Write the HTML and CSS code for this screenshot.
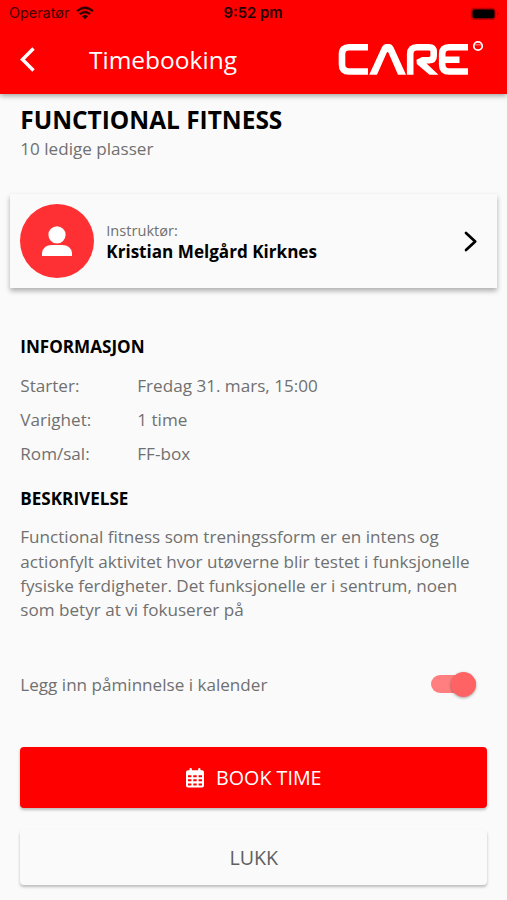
FILE: index.html
```html
<!DOCTYPE html>
<html lang="no">
<head>
<meta charset="utf-8">
<title>Timebooking</title>
<link rel="stylesheet" href="styles.css">
</head>
<body>
<header class="header">
  <div class="status">
    <div class="carrier"><span>Operatør</span>
      <svg class="wifi" width="18" height="14" viewBox="0 0 18 14" fill="none" stroke="#300" stroke-width="2.3"><path d="M1 5.2Q9-1.8 17 5.2M3.9 8.2Q9 3.8 14.1 8.2"/><path d="M9 13.3L5.9 10.2Q9 7.8 12.1 10.2Z" fill="#300" stroke="none"/></svg>
    </div>
    <span class="clock">9:52 pm</span>
    <svg class="battery" width="29" height="14" viewBox="0 0 29 14"><rect x=".7" y=".7" width="25" height="12.2" rx="3.5" fill="#c00000"/><rect x="2.5" y="2.5" width="22" height="8.8" rx="2" fill="#000"/><path d="M27 4.5Q30 6.8 27 9Z" fill="#a00000"/></svg>
  </div>
  <div class="navbar">
    <svg class="back" width="16" height="26" viewBox="0 0 16 26" fill="none" stroke="#fff" stroke-width="3.4"><path d="M14.5 1.5L3.5 12.5L14.5 23.5"/></svg>
    <h1 class="title">Timebooking</h1>
    <svg class="logo" width="146" height="35" viewBox="0 0 146 35" fill="none" stroke="#fff" stroke-width="6.6">
      <path d="M30 7.3H11Q4 7.3 4 14V24.8Q4 31.5 11 31.5H30"/>
      <path d="M31.2 34.8L44 7Q45.6 4 48 4H51.5Q53.8 4 55.4 7L68 34.8H60L50.6 13Q49.6 11 48.6 13L39 34.8Z" fill="#fff" stroke="none"/>
      <path d="M72.2 34.8V14Q72.2 7.3 79 7.3H91Q95.7 7.3 95.7 12V15.5Q95.7 20.2 91 20.2H85"/>
      <path d="M78.5 19.7L84 17H91L88.5 23.6L100.5 34.8H91.5L78.8 24Z" fill="#fff" stroke="none"/>
      <path d="M130 7.3H111Q104.2 7.3 104.2 14V24.8Q104.2 31.5 111 31.5H130M106 19.7H121.5"/>
      <circle cx="140" cy="6" r="4.2" stroke-width="1.8"/><path d="M137 4.8H143" stroke-width="1" opacity=".6"/>
    </svg>
  </div>
</header>
<main class="content">
  <h2 class="heading">FUNCTIONAL FITNESS</h2>
  <p class="spots">10 ledige plasser</p>
  <section class="card">
    <div class="avatar"><svg width="30" height="31" viewBox="0 0 30 31" fill="#fff"><circle cx="15" cy="8.8" r="8.6"/><path d="M0 30V27Q1.2 19 10 19H20Q28.8 19 30 27V30Z"/></svg></div>
    <div class="who"><span class="role">Instruktør:</span><strong class="name">Kristian Melgård Kirknes</strong></div>
    <svg class="next" width="14" height="21" viewBox="0 0 14 21" fill="none" stroke="#000" stroke-width="2.7" stroke-linecap="round" stroke-linejoin="round"><path d="M2 2L11.2 10.5L2 19"/></svg>
  </section>
  <h3 class="section">INFORMASJON</h3>
  <dl class="facts">
    <dt>Starter:</dt><dd>Fredag 31. mars, 15:00</dd>
    <dt>Varighet:</dt><dd>1 time</dd>
    <dt>Rom/sal:</dt><dd>FF-box</dd>
  </dl>
  <h3 class="section second">BESKRIVELSE</h3>
  <p class="description">Functional fitness som treningssform er en intens og<br>actionfylt aktivitet hvor utøverne blir testet i funksjonelle<br>fysiske ferdigheter. Det funksjonelle er i sentrum, noen<br>som betyr at vi fokuserer på</p>
  <div class="reminder"><span>Legg inn påminnelse i kalender</span><span class="switch"><span class="thumb"></span></span></div>
  <div class="button primary">
    <svg width="18" height="20" viewBox="0 0 18 20"><path d="M3.5 1.4Q3.5 0 4.7 0Q5.9 0 5.9 1.4V2.3H12.1V1.4Q12.1 0 13.3 0Q14.5 0 14.5 1.4V2.3H16Q18 2.3 18 4.3V17.5Q18 19.5 16 19.5H2Q0 19.5 0 17.5V4.3Q0 2.3 2 2.3H3.5Z" fill="#fff"/><path d="M2 7.2h3.4v2H2zM7.3 7.2h3.4v2H7.3zM12.6 7.2H16v2h-3.4zM2 11.3h3.4v2H2zM7.3 11.3h3.4v2H7.3zM12.6 11.3H16v2h-3.4zM2 15.4h3.4v2H2zM7.3 15.4h3.4v2H7.3zM12.6 15.4H16v2h-3.4z" fill="red"/></svg>
    <span>BOOK TIME</span>
  </div>
  <div class="button secondary"><span>LUKK</span></div>
</main>
</body>
</html>
```
FILE: styles.css
```css
* { box-sizing: border-box; }
body { margin: 0; height: 900px; overflow: hidden; background: #fafafa; color: #707070; font-family: "Open Sans", sans-serif; font-size: 17.1px; }
h1, h2, h3, p, dl, dd { margin: 0; }
svg { display: block; flex: none; }
span, strong, h1, h2, h3 { white-space: nowrap; }
.header { height: 94px; background: #f00; box-shadow: 0 2px 5px rgba(0,0,0,.35); }
.status { display: grid; grid-template-columns: 1fr auto 1fr; align-items: center; height: 28px; padding: 0 8px 0 9px; font-family: Inter, sans-serif; font-size: 14.4px; line-height: 16px; color: #400; }
.carrier { display: flex; align-items: center; gap: 7px; margin-top: -2px; }
.clock { margin: -2px 1px 0 -1px; font-size: 14.8px; font-weight: 600; color: #200; }
.battery { justify-self: end; }
.navbar { display: flex; align-items: center; height: 64px; padding-left: 19px; }
.title { margin-left: 54px; font-size: 24.5px; font-weight: 400; line-height: 34px; color: #fff; }
.logo { margin: 0 23.5px 5px auto; }
.content { padding: 9px 19.7px 0 20.3px; }
.heading { font-size: 24.45px; line-height: 34px; font-weight: 700; color: #000; }
.spots { line-height: 24px; }
.card { display: flex; align-items: center; height: 94px; margin: 33px -10px 0; padding: 0 19px 0 10px; background: #fafafa; box-shadow: 0 3px 5px rgba(0,0,0,.3); }
.avatar { display: grid; place-items: center; width: 74px; height: 74px; border-radius: 50%; background: #ff3033; }
.who { display: flex; flex-direction: column; margin-left: 12px; }
.role { font-size: 14.6px; line-height: 22px; }
.name { font-size: 17.1px; line-height: 22px; color: #000; }
.next { margin-left: auto; }
.section { margin-top: 47px; font-size: 17.1px; line-height: 24px; color: #000; }
.facts { display: grid; grid-template-columns: 117px 1fr; margin-top: 10px; line-height: 34.2px; }
.section.second { margin-top: 15px; }
.description { margin-top: 14.5px; line-height: 24.4px; white-space: nowrap; }
.reminder { display: flex; align-items: center; justify-content: space-between; height: 26px; margin-top: 48.5px; padding-right: 11.5px; }
.switch { display: flex; align-items: center; justify-content: flex-end; width: 45px; height: 18px; border-radius: 9px; background: #ff7f80; }
.thumb { width: 25px; height: 25px; border-radius: 50%; background: #ff6363; box-shadow: 0 1px 3px rgba(0,0,0,.35); }
.button { display: flex; align-items: center; justify-content: center; gap: 12px; border-radius: 4px; font-size: 19.7px; box-shadow: 0 2px 3px rgba(0,0,0,.25); }
.primary { height: 61px; margin-top: 50px; background: #f00; color: #fff; }
.secondary { height: 55px; margin-top: 22px; background: #fafafa; color: #606060; }
```
